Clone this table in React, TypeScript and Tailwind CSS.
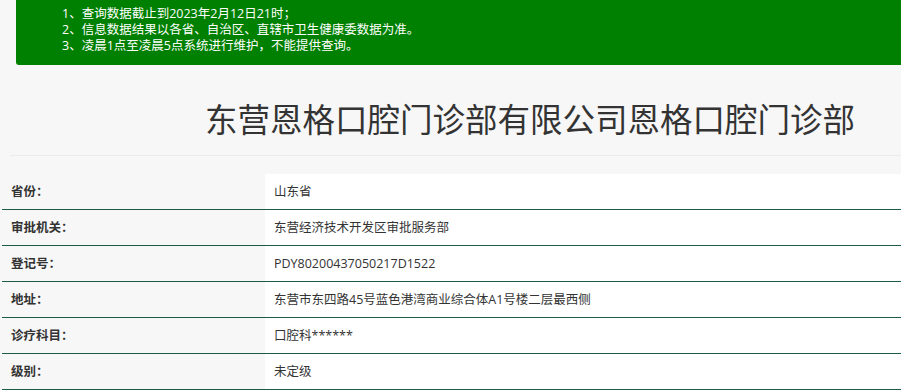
const notices = [
  '1、查询数据截止到2023年2月12日21时；',
  '2、信息数据结果以各省、自治区、直辖市卫生健康委数据为准。',
  '3、凌晨1点至凌晨5点系统进行维护，不能提供查询。',
];

const rows = [
  { label: '省份：', value: '山东省' },
  { label: '审批机关：', value: '东营经济技术开发区审批服务部' },
  { label: '登记号：', value: 'PDY80200437050217D1522' },
  { label: '地址：', value: '东营市东四路45号蓝色港湾商业综合体A1号楼二层最西侧' },
  { label: '诊疗科目：', value: '口腔科******' },
  { label: '级别：', value: '未定级' },
];

export default function App() {
  return (
    <div
      className="w-[901px] h-[390px] overflow-hidden bg-[#f7f7f7] text-[#333]"
      style={{ fontFamily: '"Open Sans", "Noto Sans CJK SC", sans-serif' }}
    >
      <div className="ml-4 h-[65px] bg-[#008000] rounded-bl-[3px] flex flex-col justify-end pb-[11px] pl-[46px]">
        {notices.map((n) => (
          <p key={n} className="text-[12.5px] leading-4 text-white">
            {n}
          </p>
        ))}
      </div>
      <div className="ml-[10px] h-[91px] border-b border-[#ebebeb] flex items-center pl-[195px] pt-[16px]">
        <h1
          className="text-[32.5px] leading-none font-normal text-[#333] whitespace-nowrap"
          style={{ fontFamily: '"Noto Sans CJK SC", sans-serif' }}
        >
          东营恩格口腔门诊部有限公司恩格口腔门诊部
        </h1>
      </div>
      <div className="ml-[2px] mt-[18px]">
        {rows.map((r) => (
          <div
            key={r.label}
            className="flex h-[36px] border-b border-[#1d5b45] text-[12.5px]"
          >
            <div className="w-[263px] pl-[9px] pt-[2px] flex items-center font-semibold">
              {r.label}
            </div>
            <div className="flex-1 bg-white pl-[9px] pt-[2px] flex items-center">
              {r.value}
            </div>
          </div>
        ))}
      </div>
    </div>
  );
}
